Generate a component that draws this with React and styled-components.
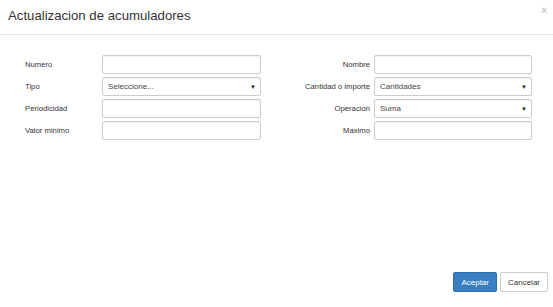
import React from "react";
import styled, { createGlobalStyle } from "styled-components";

const GlobalStyle = createGlobalStyle`
    * {
        box-sizing: border-box;
    }
    body {
        margin: 0;
        font-family: "Liberation Sans", Arial, sans-serif;
        color: #333;
        background: #fff;
    }
`;

const Modal = styled.div`
    width: 553px;
    height: 307px;
    display: flex;
    flex-direction: column;
    background: #fff;
`;

const Header = styled.div`
    height: 35px;
    padding: 0 8px;
    display: flex;
    align-items: center;
    justify-content: space-between;
    border-bottom: 1px solid #e8e8e8;
    h4 {
        margin: 0 0 3px;
        font-size: 13.2px;
        font-weight: 400;
        color: #333;
    }
`;

const Close = styled.span`
    align-self: flex-start;
    margin-top: 5px;
    margin-right: -2px;
    font-size: 10px;
    font-weight: 700;
    color: #c8c8c8;
`;

const Body = styled.div`
    flex: 1;
    padding: 20px 0 0 25px;
`;

const Form = styled.div`
    display: grid;
    grid-template-columns: 77px 159px 113px 158px;
    grid-auto-rows: 19px;
    row-gap: 3px;
    align-items: center;
`;

const Label = styled.label`
    font-size: 7.7px;
    color: #333;
    text-align: ${(p) => (p.right ? "right" : "left")};
    padding-right: ${(p) => (p.right ? "4px" : "0")};
    white-space: nowrap;
`;

const Input = styled.input`
    width: 100%;
    height: 19px;
    border: 1px solid #ccc;
    border-radius: 2px;
    box-shadow: inset 0 1px 1px rgba(0, 0, 0, 0.06);
    outline: none;
    padding: 0 5px;
    font-family: inherit;
    font-size: 8px;
`;

const SelectBox = styled.div`
    height: 19px;
    border: 1px solid #ccc;
    border-radius: 2px;
    box-shadow: inset 0 1px 1px rgba(0, 0, 0, 0.06);
    padding: 0 4px 0 5px;
    display: flex;
    align-items: center;
    justify-content: space-between;
    font-size: 8px;
    color: #444;
    span {
        font-size: 6px;
        color: #222;
    }
`;

const Footer = styled.div`
    display: flex;
    justify-content: flex-end;
    gap: 3px;
    padding: 0 5px 15px 0;
`;

const Button = styled.button`
    height: 20px;
    padding: 0 ${(p) => (p.primary ? "7px" : "7px")};
    border-radius: 2px;
    font-family: inherit;
    font-size: 8px;
    border: 1px solid ${(p) => (p.primary ? "#2e6da4" : "#ccc")};
    background: ${(p) => (p.primary ? "#3a7fc1" : "#fff")};
    color: ${(p) => (p.primary ? "#fff" : "#333")};
`;

function Select({ value }) {
    return (
        <SelectBox>
            {value}
            <span>▼</span>
        </SelectBox>
    );
}

export default function App() {
    return (
        <>
            <GlobalStyle />
            <Modal>
                <Header>
                    <h4>Actualizacion de acumuladores</h4>
                    <Close>×</Close>
                </Header>
                <Body>
                    <Form>
                        <Label>Numero</Label>
                        <Input />
                        <Label right>Nombre</Label>
                        <Input />

                        <Label>Tipo</Label>
                        <Select value="Seleccione..." />
                        <Label right>Cantidad o importe</Label>
                        <Select value="Cantidades" />

                        <Label>Periodicidad</Label>
                        <Input />
                        <Label right>Operacion</Label>
                        <Select value="Suma" />

                        <Label>Valor minimo</Label>
                        <Input />
                        <Label right>Maximo</Label>
                        <Input />
                    </Form>
                </Body>
                <Footer>
                    <Button primary>Aceptar</Button>
                    <Button>Cancelar</Button>
                </Footer>
            </Modal>
        </>
    );
}
